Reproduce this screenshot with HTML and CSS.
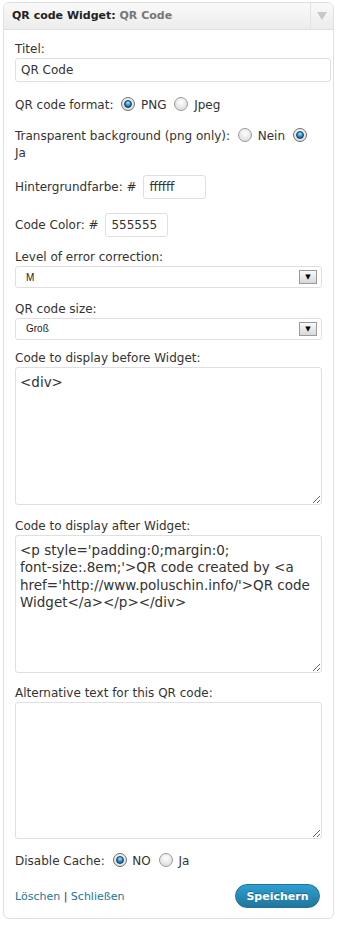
FILE: index.html
```html
<!DOCTYPE html>
<html lang="de">
<head>
    <meta charset="UTF-8">
    <title>QR code Widget</title>
    <link rel="stylesheet" href="styles.css">
</head>
<body>
    <div class="widget">
        <div class="widget-top">
            <h4>QR code Widget:<span class="in-title"> QR Code</span></h4>
            <div class="toggle"><span class="arrow"></span></div>
        </div>
        <div class="widget-inside">
            <p class="field title">
                <label>Titel:</label>
                <input type="text" class="widefat" value="QR Code">
            </p>
            <p class="field">
                QR code format: <input type="radio" name="fmt" checked> PNG <input type="radio" name="fmt"> Jpeg
            </p>
            <p class="field">
                Transparent background (png only): <input type="radio" name="tr"> Nein <input type="radio" name="tr" checked> Ja
            </p>
            <p class="field">
                Hintergrundfarbe: # <input type="text" class="color" value="ffffff">
            </p>
            <p class="field">
                Code Color: # <input type="text" class="color" value="555555">
            </p>
            <p class="field">
                <label>Level of error correction:</label>
                <span class="select"><select><option>M</option></select></span>
            </p>
            <p class="field sel">
                <label>QR code size:</label>
                <span class="select"><select><option>Groß</option></select></span>
            </p>
            <p class="field">
                <label>Code to display before Widget:</label>
                <textarea>&lt;div&gt;</textarea>
            </p>
            <p class="field">
                <label>Code to display after Widget:</label>
                <textarea>&lt;p style='padding:0;margin:0;
font-size:.8em;'&gt;QR code created by &lt;a href='http://www.poluschin.info/'&gt;QR code Widget&lt;/a&gt;&lt;/p&gt;&lt;/div&gt;</textarea>
            </p>
            <p class="field">
                <label>Alternative text for this QR code:</label>
                <textarea class="short"></textarea>
            </p>
            <p class="field">
                Disable Cache: <input type="radio" name="dc" checked> NO <input type="radio" name="dc"> Ja
            </p>
            <div class="widget-control">
                <div class="links"><a href="#">Löschen</a> | <a href="#">Schließen</a></div>
                <button class="button-primary">Speichern</button>
            </div>
        </div>
    </div>
</body>
</html>
```

FILE: styles.css
```css
body {
    margin: 0;
    background: #fff;
    font-family: "DejaVu Sans", Verdana, sans-serif;
    font-size: 12px;
    color: #333;
}
.widget {
    margin: 2px 0 0 3px;
    width: 329px;
    border: 1px solid #dfdfdf;
    border-radius: 6px;
    background: #fff;
    overflow: hidden;
}
.widget-top {
    display: flex;
    height: 26px;
    background: linear-gradient(#f9f9f9, #ececec);
    border-bottom: 1px solid #dfdfdf;
}
.widget-top h4 {
    flex: 1;
    margin: 0;
    padding: 0 8px;
    line-height: 26px;
    font-size: 11px;
    font-weight: bold;
    color: #222;
}
.in-title {
    color: #777;
}
.toggle {
    width: 22px;
    border-left: 1px solid #e2e2e2;
    display: flex;
    align-items: center;
    justify-content: center;
}
.arrow {
    width: 0;
    height: 0;
    border-left: 5px solid transparent;
    border-right: 5px solid transparent;
    border-top: 8px solid #c8c8c8;
}
.widget-inside {
    padding: 11.5px 11px 10px 11px;
}
.field {
    margin: 0 0 13.5px;
    line-height: 17px;
}
.field.title {
    margin-bottom: 15.5px;
}
.field.sel {
    margin-bottom: 11.5px;
}
.field label {
    display: block;
    line-height: 15px;
    margin-bottom: 1px;
}
input[type=text] {
    font-family: "DejaVu Sans", Verdana, sans-serif;
    font-size: 12px;
    color: #333;
    border: 1px solid #dfdfdf;
    border-radius: 3px;
    height: 24px;
    box-sizing: border-box;
    padding: 0 5px;
    margin: 0;
    vertical-align: middle;
}
.widefat {
    display: block;
    width: calc(100% + 9px);
}
.color {
    width: 63px;
    margin-left: 3px !important;
}
input[type=radio] {
    appearance: none;
    width: 14px;
    height: 14px;
    margin: 0 2px 0 4px;
    border: 1px solid #9a9a9a;
    border-radius: 50%;
    background: radial-gradient(circle at 50% 35%, #ffffff, #d4d4d4);
    vertical-align: -2px;
    box-sizing: border-box;
    position: relative;
}
input[type=radio]:checked {
    border-color: #6f6f6f;
}
input[type=radio]:checked::after {
    content: "";
    position: absolute;
    left: 2px;
    top: 2px;
    width: 8px;
    height: 8px;
    border-radius: 50%;
    box-sizing: border-box;
    border: 1px solid #0b3a5c;
    background: radial-gradient(circle at 50% 30%, #a8e6ff, #1e7fb8 60%, #0d4b78);
}
.select {
    display: block;
    position: relative;
}
.select select {
    appearance: none;
    display: block;
    width: 100%;
    height: 22px;
    border: 1px solid #dfdfdf;
    border-radius: 3px;
    background: #fff;
    font-family: "Liberation Sans", Arial, sans-serif;
    font-size: 10px;
    color: #222;
    padding: 0 10px;
}
.select::after {
    content: "▼";
    position: absolute;
    right: 5px;
    top: 4px;
    width: 16px;
    height: 12px;
    border: 1px solid #9a9a9a;
    background: linear-gradient(#fafafa, #d8d8d8);
    font-size: 7px;
    line-height: 12px;
    text-align: center;
    color: #000;
}
textarea {
    display: block;
    width: 100%;
    height: 138px;
    box-sizing: border-box;
    border: 1px solid #dfdfdf;
    border-radius: 3px;
    font-family: "DejaVu Sans", Verdana, sans-serif;
    font-size: 13.5px;
    line-height: 17.5px;
    color: #333;
    padding: 6px 4px;
    resize: vertical;
    margin: 0;
}
textarea.short {
    height: 137px;
}
.widget-control {
    display: flex;
    justify-content: space-between;
    align-items: center;
    padding: 1px 2px 0 0;
    font-size: 11px;
    color: #333;
}
.widget-control a {
    color: #21759b;
    text-decoration: none;
}
.button-primary {
    width: 85px;
    height: 24px;
    border: 1px solid #21759b;
    border-radius: 12px;
    background: linear-gradient(#2e9fd2, #21759b);
    color: #fff;
    font-family: "DejaVu Sans", Verdana, sans-serif;
    font-size: 11px;
    font-weight: bold;
    text-shadow: 0 -1px 0 rgba(0,0,0,0.3);
    cursor: pointer;
}
```
